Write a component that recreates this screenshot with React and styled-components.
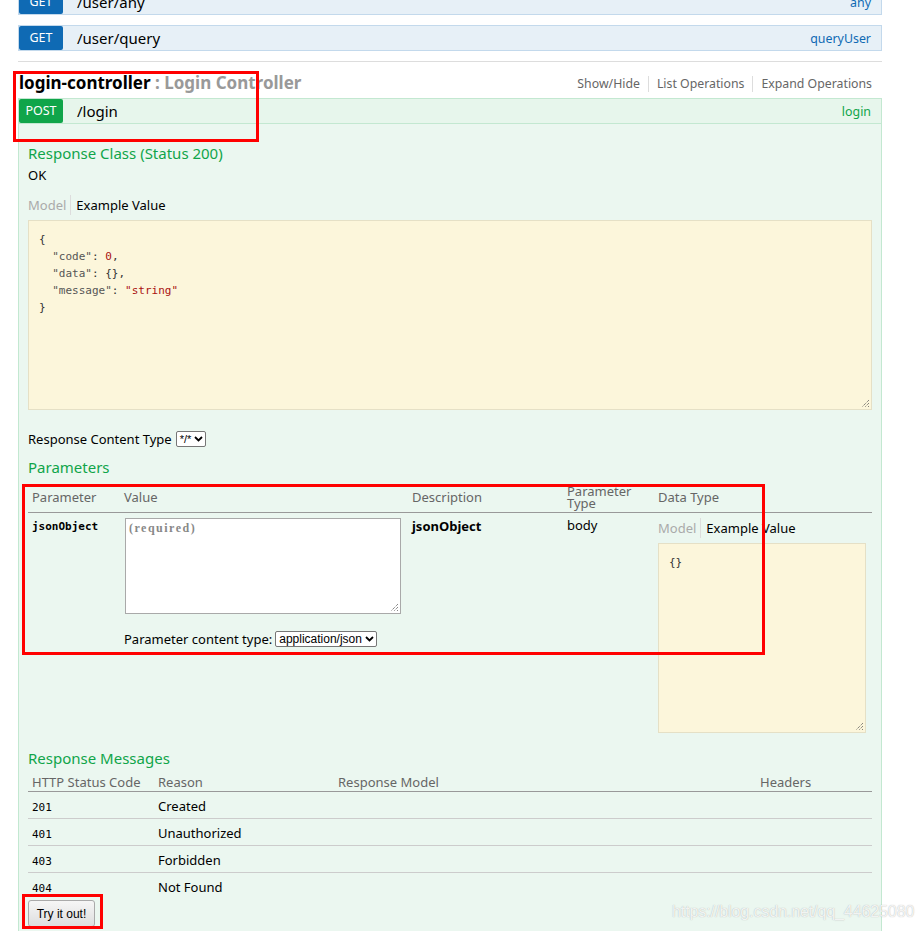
import React from "react";
import styled, { createGlobalStyle } from "styled-components";

const GlobalStyle = createGlobalStyle`
  html, body {
    margin: 0;
    padding: 0;
    background: #fff;
  }
  body {
    font-family: "Noto Sans", "Open Sans", sans-serif;
    font-size: 13px;
    color: #000;
    overflow: hidden;
  }
`;

const Page = styled.div`
  position: relative;
  width: 924px;
  height: 931px;
  overflow: hidden;
`;

const Container = styled.div`
  width: 864px;
  margin-left: 18px;
  margin-top: -11px;
`;

const OpRow = styled.div`
  display: flex;
  align-items: center;
  height: 24px;
  background: ${(p) => (p.$post ? "#e7f6ec" : "#e7f0f7")};
  border: 1px solid ${(p) => (p.$post ? "#c3e8d1" : "#c3d9ec")};
  margin-bottom: ${(p) => p.$mb || 0}px;
`;

const Badge = styled.span`
  width: 44px;
  height: 24px;
  line-height: 24px;
  text-align: center;
  color: #fff;
  font-size: 12.5px;
  border-radius: 2px;
  background: ${(p) => (p.$post ? "#10a54a" : "#0f6ab4")};
`;

const Path = styled.span`
  flex: 1;
  margin-left: 14px;
  font-size: 15px;
  color: #000;
`;

const Nick = styled.span`
  margin-right: 10px;
  font-size: 12.4px;
  color: ${(p) => (p.$post ? "#10a54a" : "#0f6ab4")};
`;

const Divider = styled.div`
  height: 1px;
  background: #ddd;
  margin-top: 10px;
`;

const ResourceHead = styled.div`
  box-sizing: border-box;
  display: flex;
  align-items: center;
  justify-content: space-between;
  height: 36px;
  padding-top: 4px;
`;

const ResourceTitle = styled.h2`
  margin: 0 0 0 1px;
  font-size: 17px;
  font-weight: 700;
  color: #000;
`;

const Sub = styled.span`
  color: #999;
`;

const ResourceLinks = styled.div`
  display: flex;
  align-items: center;
  margin: 3px 10px 0 0;
  font-size: 12.3px;
  color: #666;
`;

const LinkItem = styled.span`
  padding: 0 8px 0 8px;
  border-left: ${(p) => (p.$first ? "none" : "1px solid #ddd")};
  line-height: 16px;
  &:last-child {
    padding-right: 0;
  }
`;

const OpBody = styled.div`
  background: #ebf7f0;
  border: 1px solid #c3e8d1;
  border-top: none;
  padding: 19px 9px 0;
  height: 820px;
`;

const SectionTitle = styled.h4`
  margin: ${(p) => p.$mt || 0}px 0 0;
  font-size: 15px;
  font-weight: 400;
  color: #10a54a;
  line-height: 20px;
`;

const Plain = styled.div`
  margin-top: 3px;
  line-height: 18px;
`;

const ModelTabs = styled.div`
  display: flex;
  align-items: center;
  margin-top: ${(p) => p.$mt || 0}px;
  height: 20px;
`;

const TabModel = styled.span`
  color: #aaa;
  padding-right: 4px;
  border-right: 1px solid #ddd;
  line-height: 20px;
`;

const TabExample = styled.span`
  color: #000;
  padding-left: 5px;
`;

const CodeBox = styled.div`
  position: relative;
  box-sizing: border-box;
  width: ${(p) => p.$w || "100%"};
  height: 190px;
  margin-top: ${(p) => p.$mt || 0}px;
  background: #fcf6db;
  border: 1px solid #e5e0c6;
  padding: 10px 10px;
  font-family: "DejaVu Sans Mono", "Liberation Mono", monospace;
  font-size: 11px;
  line-height: 17px;
  color: #333;
  white-space: pre;
`;

const Key = styled.span`
  color: #555;
`;

const Val = styled.span`
  color: #a11;
`;

const Grip = styled.svg`
  position: absolute;
  right: 1px;
  bottom: 1px;
`;

const ContentType = styled.div`
  display: flex;
  align-items: center;
  gap: ${(p) => p.$gap || 4}px;
  margin-top: ${(p) => p.$mt || 0}px;
  line-height: 18px;
`;

const FakeSelect = styled.span`
  display: inline-flex;
  align-items: center;
  gap: 3px;
  height: 14px;
  padding: 0 2px 0 3px;
  border: 1px solid #767676;
  border-radius: 2px;
  background: #fff;
  font-family: "Liberation Sans", Arial, sans-serif;
  font-size: ${(p) => p.$fs || 11}px;
  color: #000;
`;

const Table = styled.div`
  display: grid;
  grid-template-columns: ${(p) => p.$cols};
  margin-top: ${(p) => p.$mt || 0}px;
`;

const Th = styled.div`
  box-sizing: border-box;
  display: flex;
  align-items: center;
  height: ${(p) => p.$h || 20}px;
  padding: 0 4px ${(p) => p.$pb || 0}px;
  color: #666;
  font-size: 13px;
  line-height: 12px;
  border-bottom: 1px solid #999;
`;

const Td = styled.div`
  padding: ${(p) => p.$pt || 5}px 4px 0;
  min-height: ${(p) => p.$h || 0}px;
  border-bottom: ${(p) => (p.$line ? "1px solid #ccc" : "none")};
  box-sizing: border-box;
`;

const Mono = styled.span`
  font-family: "DejaVu Sans Mono", "Liberation Mono", monospace;
  font-size: 11px;
  font-weight: ${(p) => (p.$bold ? 700 : 400)};
`;

const Strong = styled.span`
  font-weight: 700;
`;

const TextArea = styled.div`
  position: relative;
  box-sizing: border-box;
  width: 276px;
  height: 96px;
  margin-left: 1px;
  background: #fff;
  border: 1px solid #a9a9a9;
  padding: 2px 3px;
  font-family: "Liberation Serif", "DejaVu Serif", serif;
  font-size: 12px;
  font-weight: 700;
  letter-spacing: 1.5px;
  color: #888;
`;

const Button = styled.button`
  display: block;
  margin-top: 0;
  width: 67px;
  height: 27px;
  padding: 0;
  font-family: "Liberation Sans", Arial, sans-serif;
  font-size: 12px;
  color: #000;
  background: linear-gradient(#f6f6f6, #dedede);
  border: 1px solid #aaa;
  border-radius: 3px;
`;

const RedBox = styled.div`
  position: absolute;
  box-sizing: border-box;
  border: 3px solid #f00;
  pointer-events: none;
`;

const Watermark = styled.div`
  position: absolute;
  left: 672px;
  top: 903px;
  font-family: "Liberation Sans", Arial, sans-serif;
  font-size: 16px;
  color: rgba(255, 255, 255, 0.85);
  text-shadow: 0 0 1px rgba(120, 120, 120, 0.6);
  letter-spacing: -0.1px;
`;

function ResizeGrip() {
  return (
    <Grip width="10" height="10" viewBox="0 0 10 10">
      <path d="M9 2 L2 9 M9 5 L5 9 M9 8 L8 9" stroke="#555" strokeWidth="1" strokeDasharray="1 1" />
    </Grip>
  );
}

function Chevron() {
  return (
    <svg width="9" height="6" viewBox="0 0 9 6">
      <path d="M1 1 L4.5 4.5 L8 1" fill="none" stroke="#000" strokeWidth="1.8" />
    </svg>
  );
}

const responses = [
  ["201", "Created"],
  ["401", "Unauthorized"],
  ["403", "Forbidden"],
  ["404", "Not Found"],
];

export default function App() {
  return (
    <Page>
      <GlobalStyle />
      <Container>
        <OpRow $mb={10}>
          <Badge>GET</Badge>
          <Path>/user/any</Path>
          <Nick>any</Nick>
        </OpRow>
        <OpRow>
          <Badge>GET</Badge>
          <Path>/user/query</Path>
          <Nick>queryUser</Nick>
        </OpRow>
        <Divider />
        <ResourceHead>
          <ResourceTitle>
            login-controller <Sub>: Login Controller</Sub>
          </ResourceTitle>
          <ResourceLinks>
            <LinkItem $first>Show/Hide</LinkItem>
            <LinkItem>List Operations</LinkItem>
            <LinkItem>Expand Operations</LinkItem>
          </ResourceLinks>
        </ResourceHead>
        <OpRow $post>
          <Badge $post>POST</Badge>
          <Path>/login</Path>
          <Nick $post>login</Nick>
        </OpRow>
        <OpBody>
          <SectionTitle>Response Class (Status 200)</SectionTitle>
          <Plain>OK</Plain>
          <ModelTabs $mt={11}>
            <TabModel>Model</TabModel>
            <TabExample>Example Value</TabExample>
          </ModelTabs>
          <CodeBox $mt={5}>
            {"{\n  "}
            <Key>"code"</Key>: <Val>0</Val>
            {",\n  "}
            <Key>"data"</Key>
            {": {},\n  "}
            <Key>"message"</Key>: <Val>"string"</Val>
            {"\n}"}
            <ResizeGrip />
          </CodeBox>
          <ContentType $mt={20}>
            Response Content Type
            <FakeSelect>
              */* <Chevron />
            </FakeSelect>
          </ContentType>
          <SectionTitle $mt={9}>Parameters</SectionTitle>
          <Table $cols="92px 288px 155px 91px 1fr" $mt={9}>
            <Th $h={27} $pb={4}>Parameter</Th>
            <Th $h={27} $pb={4}>Value</Th>
            <Th $h={27} $pb={4}>Description</Th>
            <Th $h={27} $pb={4}>
              Parameter
              <br />
              Type
            </Th>
            <Th $h={27} $pb={4}>Data Type</Th>
            <Td $pt={3}>
              <Mono $bold>jsonObject</Mono>
            </Td>
            <Td $pt={5}>
              <TextArea>
                (required)
                <ResizeGrip />
              </TextArea>
              <ContentType $mt={16} $gap={3}>
                Parameter content type:
                <FakeSelect $fs={12}>
                  application/json <Chevron />
                </FakeSelect>
              </ContentType>
            </Td>
            <Td $pt={4}>
              <Strong>jsonObject</Strong>
            </Td>
            <Td $pt={3}>body</Td>
            <Td $pt={5}>
              <ModelTabs>
                <TabModel>Model</TabModel>
                <TabExample>Example Value</TabExample>
              </ModelTabs>
              <CodeBox $w="208px" $mt={5}>
                {"{}"}
                <ResizeGrip />
              </CodeBox>
            </Td>
          </Table>
          <SectionTitle $mt={15}>Response Messages</SectionTitle>
          <Table $cols="126px 180px 422px 1fr" $mt={4}>
            <Th>HTTP Status Code</Th>
            <Th>Reason</Th>
            <Th>Response Model</Th>
            <Th>Headers</Th>
            {responses.map(([code, reason], i) => (
              <React.Fragment key={code}>
                <Td $h={27} $line={i < responses.length - 1}>
                  <Mono>{code}</Mono>
                </Td>
                <Td $h={27} $line={i < responses.length - 1}>
                  {reason}
                </Td>
                <Td $h={27} $line={i < responses.length - 1} />
                <Td $h={27} $line={i < responses.length - 1} />
              </React.Fragment>
            ))}
          </Table>
          <Button>Try it out!</Button>
        </OpBody>
      </Container>
      <RedBox style={{ left: 13, top: 71, width: 246, height: 71 }} />
      <RedBox style={{ left: 22, top: 484, width: 743, height: 171 }} />
      <RedBox style={{ left: 22, top: 894, width: 81, height: 35 }} />
      <Watermark>https://blog.csdn.net/qq_44625080</Watermark>
    </Page>
  );
}
